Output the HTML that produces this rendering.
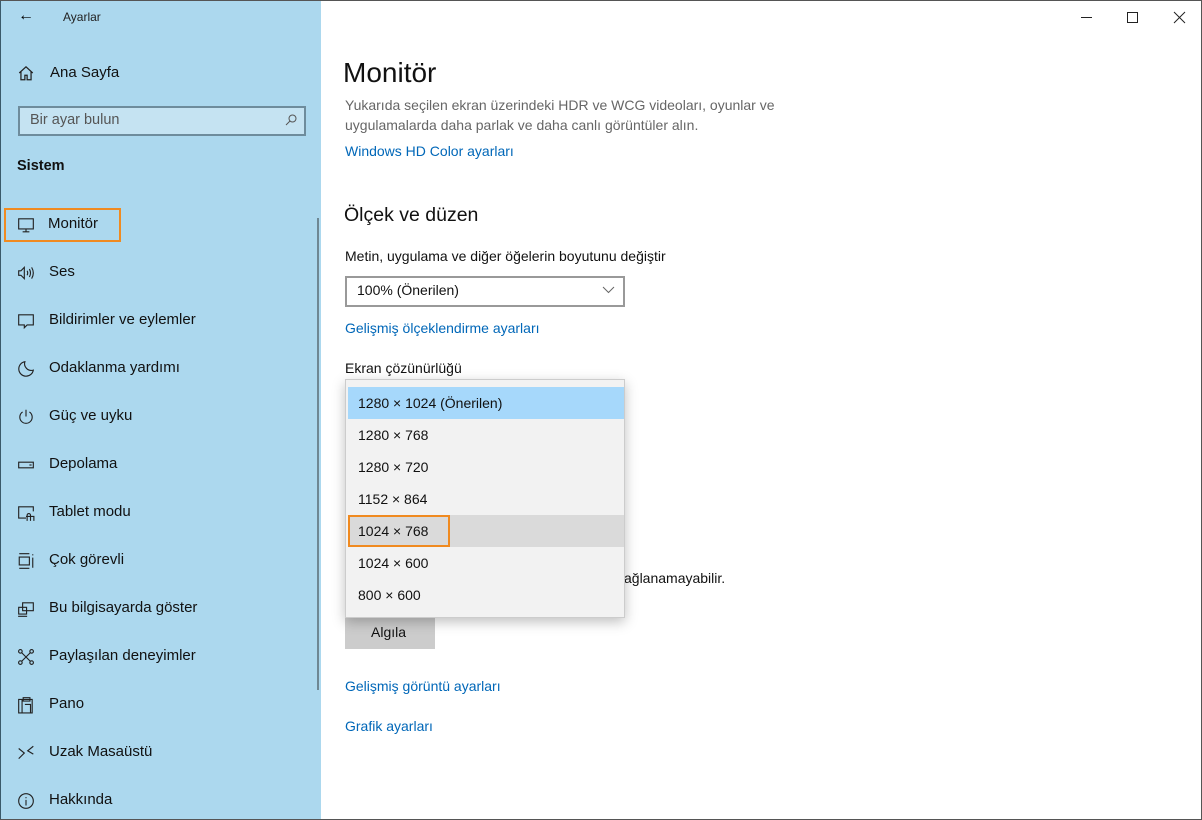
<!DOCTYPE html>
<html><head><meta charset="utf-8"><style>
*{margin:0;padding:0;box-sizing:border-box}
body{width:1202px;height:820px;overflow:hidden;background:#fff;font-family:"Liberation Sans",sans-serif;position:relative;color:#000}
.a{position:absolute;white-space:nowrap;line-height:20px}
#side{position:absolute;left:0;top:0;width:321px;height:820px;background:#acd8ee;border-left:1px solid #3a5a6a;border-bottom:1px solid #3a5a6a}
.n{font-size:15px;color:#111}
.ic{position:absolute;left:16px;width:18px;height:18px}
.ln{color:#0067b8;font-size:14px}
.opt{position:absolute;left:2px;width:276px;height:32px;line-height:32px;padding-left:10px;font-size:14px;color:#111}
</style></head><body>
<div style="position:absolute;inset:0;border:1px solid #555;border-left:none;pointer-events:none;z-index:5"></div>
<div id="side">
<div class="a" style="left:17px;top:6px;font-size:16px">←</div>
<div class="a" style="left:62px;top:7px;font-size:12px;color:#222">Ayarlar</div>
<svg class="ic" style="top:64px" viewBox="0 0 16 16" fill="none" stroke="#222" stroke-width="1.1"><path d="M2 8L8 2.5 14 8M3.5 6.8V14H7V10h2v4h3.5V6.8"/></svg>
<div class="a n" style="left:49px;top:63px">Ana Sayfa</div>
<div style="position:absolute;left:17px;top:106px;width:288px;height:30px;border:2px solid #6e8c9c;background:#c5e3f2"></div>
<div class="a" style="left:29px;top:110px;font-size:14.5px;color:#555">Bir ayar bulun</div>
<svg style="position:absolute;left:283px;top:113px" width="14" height="14" viewBox="0 0 14 14" fill="none" stroke="#555"><circle cx="8.5" cy="5.5" r="3.5"/><path d="M6 8L2 12"/></svg>
<div class="a" style="left:16px;top:156px;font-size:14.5px;font-weight:bold;color:#111">Sistem</div>
<div style="position:absolute;left:3px;top:208px;width:117px;height:34px;border:2px solid #f08a20"></div>
<svg class="ic" style="top:216px" viewBox="0 0 16 16" fill="none" stroke="#222"><rect x="1.5" y="2.5" width="13" height="9"/><path d="M8 11.5v2.5M5 14h6"/></svg>
<div class="a n" style="left:47px;top:214px">Monitör</div>
<svg class="ic" style="top:264px" viewBox="0 0 16 16" fill="none" stroke="#222"><path d="M1.5 6h2l3-3v10l-3-3h-2zM9 6q1 2 0 4M11 4.5q2 3.5 0 7M13 3q3 5 0 10"/></svg>
<div class="a n" style="left:48px;top:262px">Ses</div>
<svg class="ic" style="top:312px" viewBox="0 0 16 16" fill="none" stroke="#222"><path d="M1.5 2.5h13v9H9l-2.5 2.5v-2.5h-5z"/></svg>
<div class="a n" style="left:48px;top:310px">Bildirimler ve eylemler</div>
<svg class="ic" style="top:360px" viewBox="0 0 16 16" fill="none" stroke="#222"><path d="M7 1.5A6.5 6.5 0 1 0 14.5 9 6 6 0 0 1 7 1.5z"/></svg>
<div class="a n" style="left:48px;top:358px">Odaklanma yardımı</div>
<svg class="ic" style="top:408px" viewBox="0 0 16 16" fill="none" stroke="#222"><path d="M8 1.5v6M5 3.5a5.5 5.5 0 1 0 6 0"/></svg>
<div class="a n" style="left:48px;top:406px">Güç ve uyku</div>
<svg class="ic" style="top:456px" viewBox="0 0 16 16" fill="none" stroke="#222"><rect x="1.5" y="5.5" width="13" height="5"/><path d="M11 8h2"/></svg>
<div class="a n" style="left:48px;top:454px">Depolama</div>
<svg class="ic" style="top:504px" viewBox="0 0 16 16" fill="none" stroke="#222"><path d="M8 12.5H1.5v-10h13v4M9 15v-5a1.5 1.5 0 0 1 3 0v5M8 11h7v4"/></svg>
<div class="a n" style="left:48px;top:502px">Tablet modu</div>
<svg class="ic" style="top:552px" viewBox="0 0 16 16" fill="none" stroke="#222"><path d="M2 1.5h9M2 14.5h9M2 4.5h9v7H2zM14 2v1M14 5v9"/></svg>
<div class="a n" style="left:48px;top:550px">Çok görevli</div>
<svg class="ic" style="top:600px" viewBox="0 0 16 16" fill="none" stroke="#222"><path d="M5 2.5h9.5v7H5zM1.5 6.5h7v6h-7zM1 14.5h8"/></svg>
<div class="a n" style="left:48px;top:598px">Bu bilgisayarda göster</div>
<svg class="ic" style="top:648px" viewBox="0 0 16 16" fill="none" stroke="#222"><circle cx="3" cy="3" r="1.6"/><circle cx="13" cy="3" r="1.6"/><circle cx="3" cy="13" r="1.6"/><circle cx="13" cy="13" r="1.6"/><path d="M4.2 4.2l7.6 7.6M11.8 4.2l-7.6 7.6"/></svg>
<div class="a n" style="left:48px;top:646px">Paylaşılan deneyimler</div>
<svg class="ic" style="top:696px" viewBox="0 0 16 16" fill="none" stroke="#222"><path d="M1.5 3h3v12h-3zM4.5 3h9v12h-9zM5.5 1.5h6v3h-6zM7 7.5h5v7"/></svg>
<div class="a n" style="left:48px;top:694px">Pano</div>
<svg class="ic" style="top:744px" viewBox="0 0 16 16" fill="none" stroke="#222"><path d="M1.5 4l5 4-5 5M14.5 2l-5 4 5 3"/></svg>
<div class="a n" style="left:48px;top:742px">Uzak Masaüstü</div>
<svg class="ic" style="top:792px" viewBox="0 0 16 16" fill="none" stroke="#222"><circle cx="8" cy="8" r="6.5"/><path d="M8 7v5M8 4.5v1"/></svg>
<div class="a n" style="left:48px;top:790px">Hakkında</div>
<div style="position:absolute;left:316px;top:218px;width:2px;height:472px;background:#6e8793"></div>
</div>
<div style="position:absolute;left:1081px;top:17px;width:11px;height:1px;background:#222"></div>
<div style="position:absolute;left:1127px;top:12px;width:11px;height:11px;border:1px solid #222"></div>
<svg style="position:absolute;left:1173px;top:11px" width="13" height="13" viewBox="0 0 13 13" stroke="#222"><path d="M1 1l11 11M12 1L1 12"/></svg>
<div class="a" style="left:343px;top:57px;font-size:28px;line-height:32px;color:#111">Monitör</div>
<div class="a" style="left:345px;top:95px;font-size:14px;color:#666">Yukarıda seçilen ekran üzerindeki HDR ve WCG videoları, oyunlar ve</div>
<div class="a" style="left:345px;top:115px;font-size:14px;color:#666">uygulamalarda daha parlak ve daha canlı görüntüler alın.</div>
<div class="a ln" style="left:345px;top:141px">Windows HD Color ayarları</div>
<div class="a" style="left:344px;top:203px;font-size:19.5px;line-height:24px;color:#111">Ölçek ve düzen</div>
<div class="a" style="left:345px;top:246px;font-size:14px;color:#111">Metin, uygulama ve diğer öğelerin boyutunu değiştir</div>
<div style="position:absolute;left:345px;top:276px;width:280px;height:31px;border:2px solid #999"></div>
<div class="a" style="left:357px;top:280px;font-size:14px;color:#111">100% (Önerilen)</div>
<svg style="position:absolute;left:602px;top:286px" width="13" height="8" viewBox="0 0 13 8" fill="none" stroke="#666"><path d="M1 1l5.5 5.5L12 1"/></svg>
<div class="a ln" style="left:345px;top:318px">Gelişmiş ölçeklendirme ayarları</div>
<div class="a" style="left:345px;top:358px;font-size:14px;color:#111">Ekran çözünürlüğü</div>
<div class="a" style="left:624px;top:568px;font-size:14px;color:#111">ağlanamayabilir.</div>
<div style="position:absolute;left:345px;top:617px;width:90px;height:32px;background:#cccccc"></div>
<div class="a" style="left:371px;top:622px;font-size:14px;color:#111">Algıla</div>
<div class="a ln" style="left:345px;top:676px">Gelişmiş görüntü ayarları</div>
<div class="a ln" style="left:345px;top:716px">Grafik ayarları</div>
<div style="position:absolute;left:345px;top:379px;width:280px;height:239px;background:#f2f2f2;border:1px solid #ccc;box-shadow:0 4px 12px rgba(0,0,0,.25)">
<div class="opt" style="top:7px;background:#a6d8fb">1280 × 1024 (Önerilen)</div>
<div class="opt" style="top:39px">1280 × 768</div>
<div class="opt" style="top:71px">1280 × 720</div>
<div class="opt" style="top:103px">1152 × 864</div>
<div class="opt" style="top:135px;background:#dadada">1024 × 768</div>
<div class="opt" style="top:167px">1024 × 600</div>
<div class="opt" style="top:199px">800 × 600</div>
<div style="position:absolute;left:2px;top:135px;width:102px;height:32px;border:2px solid #f08a20"></div>
</div>
</body></html>
